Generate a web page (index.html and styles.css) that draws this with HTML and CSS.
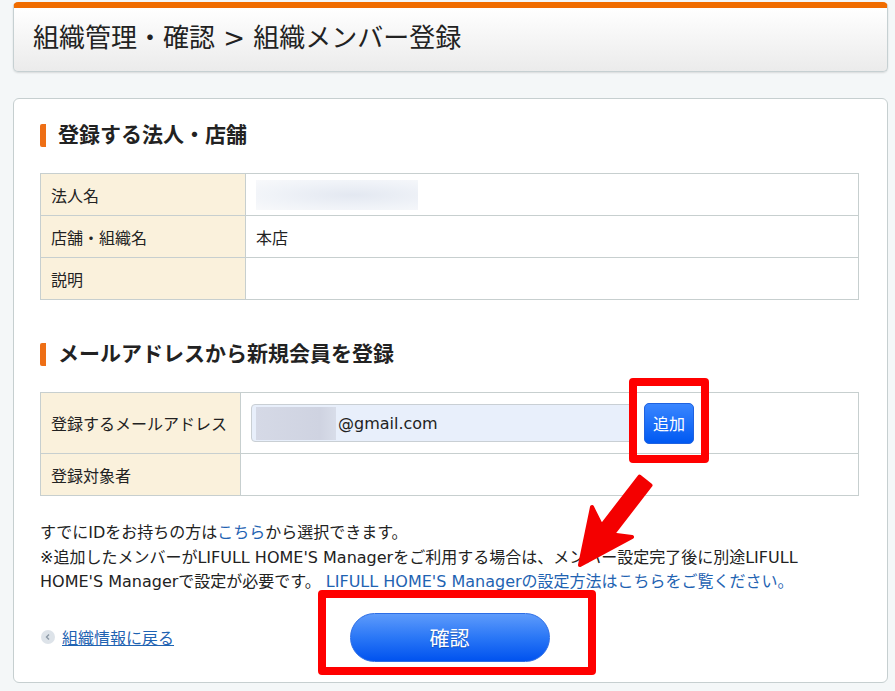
FILE: index.html
```html
<!DOCTYPE html>
<html lang="ja">
<head>
<meta charset="UTF-8">
<title>組織メンバー登録</title>
<link rel="stylesheet" href="styles.css">
</head>
<body>
	<div class="page">
		<div class="head">
			<h1 class="title">組織管理・確認 &gt; 組織メンバー登録</h1>
		</div>

		<div class="content">
			<h2 class="sec">登録する法人・店舗</h2>
			<table class="info info_shop">
				<tr>
					<th>法人名</th>
					<td><span class="blur blur_name"></span></td>
				</tr>
				<tr>
					<th>店舗・組織名</th>
					<td>本店</td>
				</tr>
				<tr>
					<th>説明</th>
					<td></td>
				</tr>
			</table>

			<h2 class="sec">メールアドレスから新規会員を登録</h2>
			<table class="info info_mail">
				<tr class="row_input">
					<th>登録するメールアドレス</th>
					<td>
						<div class="mail_line">
							<div class="mail_input"><span class="blur blur_mail"></span>@gmail.com</div>
							<button class="btn_add">追加</button>
						</div>
					</td>
				</tr>
				<tr>
					<th>登録対象者</th>
					<td></td>
				</tr>
			</table>

			<p class="note">すでにIDをお持ちの方は<a class="link" href="#">こちら</a>から選択できます。<br>※追加したメンバーがLIFULL HOME'S Managerをご利用する場合は、メンバー設定完了後に別途LIFULL HOME'S Managerで設定が必要です。 <a class="link" href="#">LIFULL HOME'S Managerの設定方法はこちらをご覧ください。</a></p>

			<div class="foot">
				<a class="back" href="#">
					<svg class="back_icon" width="14" height="14" viewBox="0 0 14 14">
						<circle cx="7" cy="7" r="7" fill="#dde3e9"/>
						<path d="M8 4.5 L5.5 7 L8 9.5" fill="none" stroke="#8c99a6" stroke-width="1.4"/>
					</svg>
					<span>組織情報に戻る</span>
				</a>
				<button class="btn_ok">確認</button>
				<div></div>
			</div>
		</div>
	</div>

	<!-- 注釈 -->
	<div class="mark mark_add"></div>
	<div class="mark mark_ok"></div>
	<svg class="arrow" width="90" height="105" viewBox="0 0 90 105">
		<polygon points="10,95 62,67 42.5,64.5 80.5,15.3 69.5,6.7 31.5,55.9 22,37" fill="#f40000" stroke="#f40000" stroke-width="4" stroke-linejoin="round"/>
	</svg>
</body>
</html>
```

FILE: styles.css
```css
body {
	margin: 0;
	background: #f4f7f8;
	font-family: "DejaVu Sans", "Noto Sans CJK JP", sans-serif;
	color: #222;
}

.page {
	padding: 2px 7px 9px 13px;
}

.head {
	height: 63px;
	border: 1px solid #c6d0d2;
	border-top: 6px solid #f06c00;
	border-radius: 5px;
	background: linear-gradient(#ffffff, #ebebeb);
	box-shadow: 0 1px 2px rgba(0, 0, 0, .12);
	padding: 0 19px;
}

.title {
	margin: 0;
	font-size: 26px;
	font-weight: normal;
	line-height: 60px;
	color: #222;
}

.content {
	margin-top: 26px;
	background: #fff;
	border: 1px solid #c6cfd0;
	border-radius: 6px;
	padding: 25px 28px 20px 26px;
}

.sec {
	margin: 0 0 26px;
	font-size: 21px;
	line-height: 23px;
	font-weight: bold;
	border-left: 6px solid #ee6f16;
	border-radius: 2px;
	padding-left: 12px;
}

.info {
	width: 100%;
	border-collapse: collapse;
	font-size: 16px;
}

.info th,
.info td {
	border: 1px solid #c7cfcf;
	height: 41px;
	padding: 0 10px;
	text-align: left;
	font-weight: normal;
}

.info th {
	background: #faf1dc;
}

.info_shop th {
	width: 184px;
}

.info_shop {
	margin-bottom: 43px;
}

.info_mail th {
	width: 179px;
}

.info_mail .row_input th,
.info_mail .row_input td {
	height: 60px;
}

.blur {
	display: inline-block;
	vertical-align: middle;
}

.blur_name {
	width: 162px;
	height: 30px;
	background: radial-gradient(ellipse at 60% 50%, #e3e8f1, #f0f3f8 60%, #f8f9fb);
}

.mail_line {
	display: flex;
	align-items: center;
	gap: 8px;
}

.mail_input {
	width: 385px;
	height: 38px;
	box-sizing: border-box;
	border: 1px solid #c9cfd4;
	border-radius: 4px;
	background: #e8effb;
	padding-left: 4px;
	display: flex;
	align-items: center;
	font-size: 16px;
	color: #222;
}

.blur_mail {
	width: 80px;
	height: 33px;
	background: linear-gradient(90deg, #d5d9e6, #cfd3e1 80%, #d8dde9);
	margin-right: 2px;
}

.btn_add {
	width: 50px;
	height: 41px;
	border: 1px solid #1f62e0;
	border-radius: 5px;
	background: linear-gradient(#3a86ff, #0059f2);
	color: #fff;
	font-family: inherit;
	font-size: 16px;
	padding: 0;
}

.note {
	margin: 25px 0 0;
	font-size: 16px;
	line-height: 24.5px;
}

.link {
	color: #1f63b2;
	text-decoration: none;
}

.foot {
	margin-top: 18px;
	display: grid;
	grid-template-columns: 1fr auto 1fr;
	align-items: center;
}

.back {
	display: flex;
	align-items: center;
	gap: 7px;
	color: #1f63b2;
	font-size: 16px;
	padding-left: 1px;
}

.back span {
	text-decoration: underline;
}

.btn_ok {
	width: 200px;
	height: 49px;
	border: 1px solid #2d6ee6;
	border-radius: 25px;
	background: linear-gradient(#5e9bfb, #2a77f6 50%, #0052ef);
	color: #fff;
	font-family: inherit;
	font-size: 20px;
	text-shadow: 0 1px 1px rgba(0, 0, 0, .25);
}

.mark {
	position: absolute;
	box-sizing: border-box;
	border: 8px solid #ff0000;
	border-radius: 4px;
}

.mark_add {
	left: 629px;
	top: 378px;
	width: 80px;
	height: 85px;
}

.mark_ok {
	left: 318px;
	top: 590px;
	width: 278px;
	height: 85px;
}

.arrow {
	position: absolute;
	left: 570px;
	top: 470px;
}
```
